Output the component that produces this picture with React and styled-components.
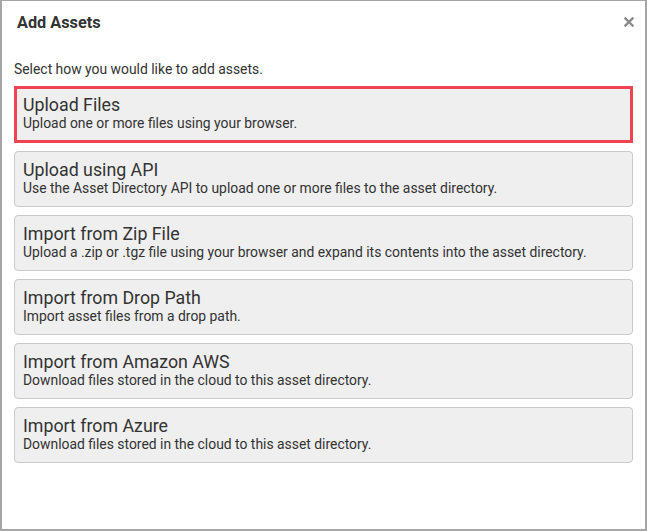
import React, { useState } from 'react';
import styled, { createGlobalStyle } from 'styled-components';

const options = [
  { title: 'Upload Files', desc: 'Upload one or more files using your browser.' },
  { title: 'Upload using API', desc: 'Use the Asset Directory API to upload one or more files to the asset directory.' },
  { title: 'Import from Zip File', desc: 'Upload a .zip or .tgz file using your browser and expand its contents into the asset directory.' },
  { title: 'Import from Drop Path', desc: 'Import asset files from a drop path.' },
  { title: 'Import from Amazon AWS', desc: 'Download files stored in the cloud to this asset directory.' },
  { title: 'Import from Azure', desc: 'Download files stored in the cloud to this asset directory.' },
];

const GlobalStyle = createGlobalStyle`
  html, body {
    margin: 0;
    padding: 0;
    background: #fff;
  }
  body {
    font-family: Roboto, 'Liberation Sans', sans-serif;
    color: #333;
  }
`;

const Dialog = styled.div`
  box-sizing: border-box;
  width: 647px;
  height: 531px;
  border: 2px solid #a6a6a6;
  border-top-width: 1px;
  background: #fff;
  display: flex;
  flex-direction: column;
`;

const Header = styled.div`
  display: flex;
  align-items: center;
  justify-content: space-between;
  height: 42px;
  padding: 0 11px 0 15px;
`;

const Title = styled.h1`
  margin: 0;
  font-size: 16.3px;
  font-weight: bold;
  color: #333;
`;

const Close = styled.button`
  border: none;
  background: none;
  padding: 0;
  width: 10px;
  height: 10px;
  display: flex;
  cursor: pointer;
`;

const Body = styled.div`
  padding: 18px 12px 0 12px;
  display: flex;
  flex-direction: column;
`;

const Prompt = styled.p`
  margin: 0 0 9px 0;
  font-size: 13.9px;
  line-height: 16px;
  color: #333;
`;

const List = styled.div`
  display: flex;
  flex-direction: column;
  gap: 8px;
`;

const Option = styled.div`
  box-sizing: border-box;
  height: ${p => (p.$selected ? '57px' : '56px')};
  padding: ${p => (p.$selected ? '5px 6px' : '7px 8px')};
  background: #efefef;
  border: ${p => (p.$selected ? '3px solid #f04452' : '1px solid #cbcbcb')};
  border-radius: ${p => (p.$selected ? '0' : '4px')};
  cursor: pointer;
`;

const OptionTitle = styled.div`
  font-size: 17.8px;
  line-height: 21px;
  color: #333;
`;

const OptionDesc = styled.div`
  font-size: 13.9px;
  line-height: 17px;
  color: #333;
`;

export default function App() {
  const [selected, setSelected] = useState(0);
  return (
    <>
      <GlobalStyle />
      <Dialog>
        <Header>
          <Title>Add Assets</Title>
          <Close aria-label="Close">
            <svg width="10" height="10" viewBox="0 0 10 10">
              <path d="M1.5 1.5 L8.5 8.5 M8.5 1.5 L1.5 8.5" stroke="#8a8a8a" strokeWidth="2.4" strokeLinecap="square" />
            </svg>
          </Close>
        </Header>
        <Body>
          <Prompt>Select how you would like to add assets.</Prompt>
          <List>
            {options.map((o, i) => (
              <Option key={o.title} $selected={i === selected} onClick={() => setSelected(i)}>
                <OptionTitle>{o.title}</OptionTitle>
                <OptionDesc>{o.desc}</OptionDesc>
              </Option>
            ))}
          </List>
        </Body>
      </Dialog>
    </>
  );
}
